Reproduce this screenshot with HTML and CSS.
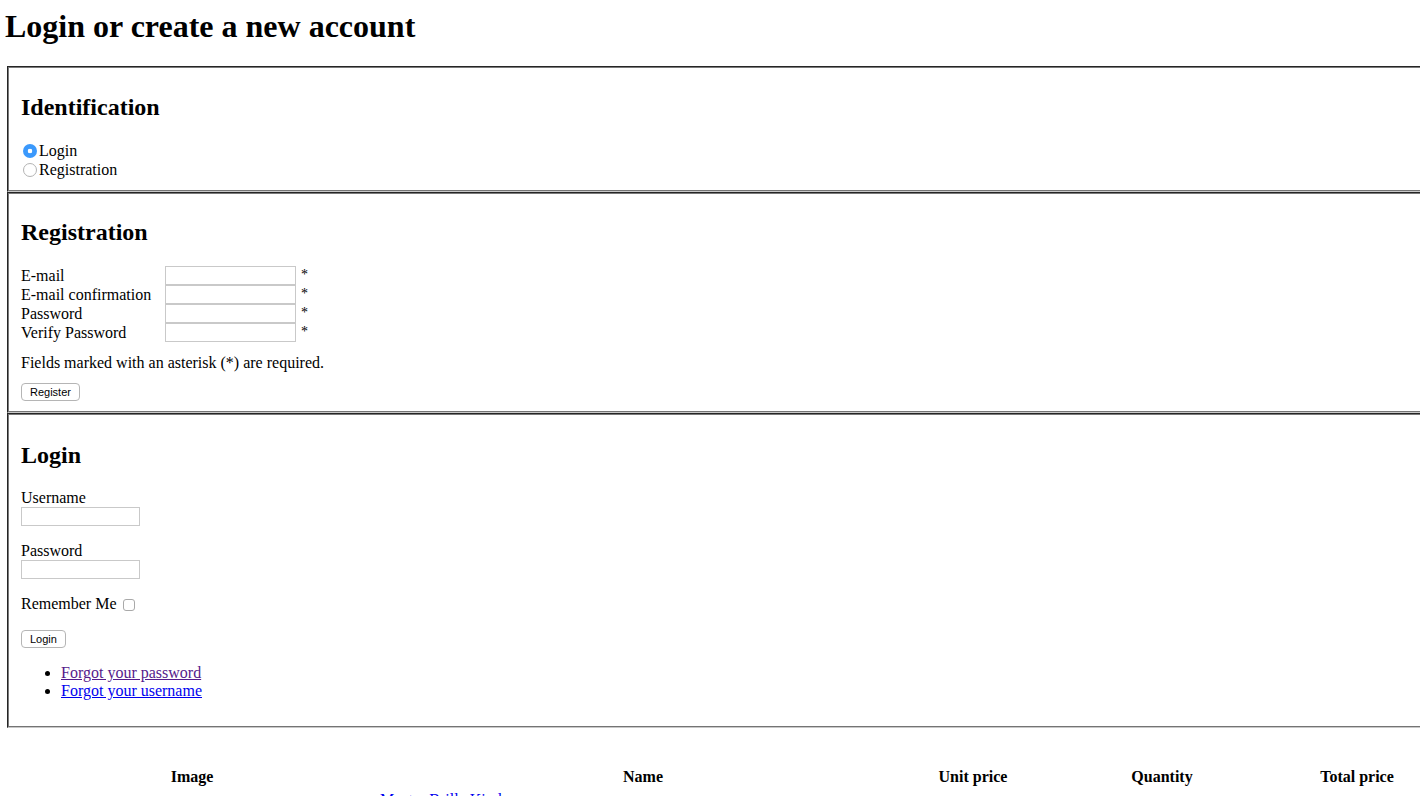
FILE: index.html
```html
<!DOCTYPE html>
<html lang="en">
<head>
<meta charset="UTF-8">
<title>Login or create a new account</title>
<link rel="stylesheet" href="styles.css">
</head>
<body>

<h1>Login or create a new account</h1>

<div class="forms">

  <!-- IDENTIFICATION -->
  <fieldset>
    <h2>Identification</h2>
    <div class="choices">
      <label class="choice"><input type="radio" name="mode" checked>Login</label>
      <label class="choice"><input type="radio" name="mode">Registration</label>
    </div>
  </fieldset>

  <!-- REGISTRATION -->
  <fieldset>
    <h2>Registration</h2>
    <table class="reg">
      <tr><td class="lbl">E-mail</td><td><input type="text" class="field"></td><td class="req">*</td></tr>
      <tr><td class="lbl">E-mail confirmation</td><td><input type="text" class="field"></td><td class="req">*</td></tr>
      <tr><td class="lbl">Password</td><td><input type="password" class="field"></td><td class="req">*</td></tr>
      <tr><td class="lbl">Verify Password</td><td><input type="password" class="field"></td><td class="req">*</td></tr>
    </table>
    <p class="note">Fields marked with an asterisk (*) are required.</p>
    <button class="btn">Register</button>
  </fieldset>

  <!-- LOGIN -->
  <fieldset class="login">
    <h2>Login</h2>
    <div class="row">
      <label>Username</label>
      <input type="text" class="field short">
    </div>
    <div class="row">
      <label>Password</label>
      <input type="password" class="field short">
    </div>
    <div class="row remember">
      <label>Remember Me</label> <input type="checkbox" class="check">
    </div>
    <button class="btn">Login</button>
    <ul class="links">
      <li><a href="#" class="visited">Forgot your password</a></li>
      <li><a href="#">Forgot your username</a></li>
    </ul>
  </fieldset>

</div>

<table class="cart">
  <tr>
    <th class="c-img">Image</th>
    <th class="c-name">Name</th>
    <th class="c-unit">Unit price</th>
    <th class="c-qty">Quantity</th>
    <th class="c-total">Total price</th>
  </tr>
  <tr>
    <td></td>
    <td><a href="#">Muster Brille Kinder</a></td>
    <td></td>
    <td></td>
    <td></td>
  </tr>
</table>

</body>
</html>
```

FILE: styles.css
```css
html{overflow:hidden;}

body{
 margin:8px 5px;
 font-family:"Liberation Serif","Times New Roman",serif;
 font-size:16px;
 color:#000;
 background:#fff;
}

h1{
 font-size:32px;
 margin:0 0 21px;
}

h2{
 font-size:24px;
 margin:20px 0;
}

/* FIELDSETS */
.forms{
 overflow:hidden;
 margin-right:-30px;
}

fieldset{
 margin:0 -40px 0 2px;
 padding:5.6px 12px 10px;
 border:2px groove #c0c0c0;
 border-color:#7a7a7a #c8c8c8 #c8c8c8 #7a7a7a;
 border-right:none;
}

/* RADIOS */
.choices{
 padding-top:1px;
}

.choice{
 display:flex;
 align-items:center;
 height:19px;
}

.choice input{
 appearance:none;
 width:14px;
 height:14px;
 margin:0 2px;
 border:1px solid #b3b3b3;
 border-radius:50%;
 background:#fff;
 box-sizing:border-box;
}

.choice input:checked{
 border:none;
 background:radial-gradient(circle,#fff 0 2px,#3b99fc 2.6px);
}

/* REGISTRATION TABLE */
.reg{
 border-collapse:collapse;
}

.reg td{
 padding:0;
 height:19px;
 line-height:17px;
}

.reg .lbl{
 width:144px;
}

.reg .req{
 padding-left:5px;
 font-size:14px;
 vertical-align:top;
}

.field{
 display:block;
 width:131px;
 height:19px;
 box-sizing:border-box;
 border:1px solid #c9c9c9;
 padding:0 2px;
 margin:0;
 font-size:13px;
}

.field.short{
 width:119px;
}

.note{
 margin:12px 0 10px;
}

/* BUTTONS */
.btn{
 font-family:"Liberation Sans",Arial,sans-serif;
 font-size:11px;
 height:18px;
 padding:0 8px;
 background:#fff;
 border:1px solid #b5b5b5;
 border-radius:4px;
 color:#000;
}

/* LOGIN */
.login h2{
 margin-top:21px;
}

.row{
 margin:0 0 16px;
 line-height:18px;
}

.row label{
 display:block;
}

.row.remember label{
 display:inline;
}

.check{
 appearance:none;
 width:12px;
 height:12px;
 margin:0 0 0 2px;
 border:1px solid #a9a9a9;
 border-radius:3px;
 vertical-align:-2px;
 background:#fff;
}

.links{
 margin:16px 0 16px;
 padding-left:40px;
 line-height:18px;
}

a{color:#0000ee;}
a.visited{color:#551a8b;}

/* CART */
.cart{
 width:1424px;
 table-layout:fixed;
 margin-top:36px;
 border-spacing:2px;
}

.cart th{
 padding:1px;
 height:20px;
}

.cart td{
 padding:1px;
}

.c-img{width:368px;}
.c-name{width:526px;}
.c-unit{width:126px;}
.c-qty{width:244px;}
.c-total{width:138px;}
```
